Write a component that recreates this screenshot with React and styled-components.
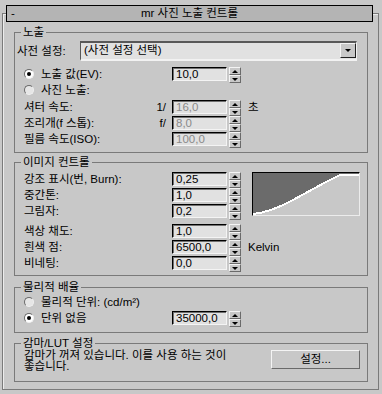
import React from "react";
import styled, { createGlobalStyle } from "styled-components";

const GlobalStyle = createGlobalStyle`
  html, body {
    margin: 0;
    padding: 0;
    background: #c8c8c8;
  }
  body {
    font-family: "Liberation Sans", "Noto Sans CJK KR", sans-serif;
    font-size: 11.5px;
    line-height: 13px;
    color: #000;
  }
`;

const Page = styled.div`
  width: 382px;
  height: 394px;
  box-sizing: border-box;
  padding-top: 13px;
  overflow: hidden;
`;

// 롤아웃 바깥 테두리
const Frame = styled.div`
  margin: 0 3px 0 2px;
  border: 1px solid #7a7a7a;
  box-shadow: inset 1px 1px 0 #ececec;
  padding-bottom: 7px;
`;

const Header = styled.div`
  margin: -9px 5px 0 3px;
  height: 17px;
  box-sizing: border-box;
  border: 1px solid #000;
  background: #b4b4b4;
  display: grid;
  grid-template-columns: 20px 1fr 20px;
  align-items: center;
`;

const Collapse = styled.span`
  padding-left: 4px;
`;

const Title = styled.span`
  text-align: center;
  white-space: nowrap;
`;

const Group = styled.fieldset`
  margin: ${(p) => p.$mt}px 10px 0 11px;
  padding: ${(p) => p.$pt || 0}px 0 ${(p) => p.$pb || 0}px 0;
  border: 1px solid #7a7a7a;
  min-width: 0;
`;

const Legend = styled.legend`
  margin-left: 6px;
  padding: 0 2px;
  height: 13px;
  line-height: 13px;
`;

const SelectRow = styled.div`
  display: flex;
  align-items: center;
  height: 20px;
  padding-left: 2px;
`;

const Row = styled.div`
  display: flex;
  align-items: flex-start;
  height: 16px;
  padding-left: 9px;
  margin-top: ${(p) => p.$mt || 0}px;
`;

const Label = styled.div`
  width: ${(p) => p.$w ?? 130}px;
  line-height: 14px;
  white-space: nowrap;
  display: flex;
  align-items: center;
`;

const Prefix = styled.div`
  width: 12px;
  padding-right: 6px;
  text-align: right;
  line-height: 14px;
`;

const Select = styled.div`
  width: 277px;
  height: 20px;
  box-sizing: border-box;
  background: #e1e1e1;
  border-top: 2px solid #585858;
  border-left: 1px solid #585858;
  border-right: 1px solid #f2f2f2;
  border-bottom: 2px solid #f2f2f2;
  display: flex;
  align-items: flex-start;
  justify-content: space-between;
  padding-left: 3px;
  line-height: 15px;
`;

const DropBtn = styled.div`
  width: 16px;
  height: 15px;
  box-sizing: border-box;
  background: #c8c8c8;
  border: 1px solid;
  border-color: #f4f4f4 #202020 #202020 #f4f4f4;
  display: flex;
  align-items: center;
  justify-content: center;
`;

const Arrow = styled.span`
  width: 0;
  height: 0;
  border-left: 3px solid transparent;
  border-right: 3px solid transparent;
  ${(p) =>
    p.$up ? "border-bottom: 3px solid #000;" : "border-top: 3px solid #000;"}
`;

const Field = styled.input`
  width: 55px;
  height: 14px;
  box-sizing: border-box;
  margin: 0;
  background: #e1e1e1;
  border-style: solid;
  border-width: 1px;
  border-color: #000 #f4f4f4 #f4f4f4 #000;
  box-shadow: inset 1px 1px 0 #707070;
  padding: 0 0 0 3px;
  font: inherit;
  line-height: 12px;
  color: ${(p) => (p.disabled ? "#8a8a8a" : "#000")};
  outline: none;
`;

const Spinner = styled.div`
  margin-left: 2px;
  width: 12px;
  height: 16px;
  display: flex;
  flex-direction: column;
`;

const SpinHalf = styled.div`
  flex: 1;
  box-sizing: border-box;
  background: #c8c8c8;
  border: 1px solid;
  border-color: #f4f4f4 #6a6a6a #6a6a6a #f4f4f4;
  display: flex;
  align-items: center;
  justify-content: center;
`;

const Unit = styled.span`
  margin-left: 7px;
  line-height: 14px;
`;

const RadioDot = styled.span`
  width: 10px;
  height: 10px;
  flex: none;
  box-sizing: border-box;
  border-radius: 50%;
  border: 1px solid;
  border-color: #6a6a6a #efefef #efefef #6a6a6a;
  background: ${(p) => (p.$checked ? "#fff" : "#e6e6e6")};
  margin-right: 7px;
  display: flex;
  align-items: center;
  justify-content: center;
  &::after {
    content: "";
    width: 4px;
    height: 4px;
    border-radius: 50%;
    background: ${(p) => (p.$checked ? "#000" : "transparent")};
  }
`;

const Split = styled.div`
  display: flex;
  align-items: flex-start;
`;

const Stack = styled.div`
  display: flex;
  flex-direction: column;
`;

const Curve = styled.div`
  margin-left: 11px;
  width: 108px;
  height: 44px;
  box-sizing: border-box;
  border-style: solid;
  border-width: 1px;
  border-color: #000 #ececec #ececec #000;
  background: #c8c8c8;
  svg {
    display: block;
  }
`;

const Note = styled.div`
  display: flex;
  align-items: flex-start;
  padding-left: 9px;
`;

const NoteText = styled.p`
  margin: 0;
  line-height: 11px;
  white-space: nowrap;
`;

const Button = styled.button`
  margin-left: auto;
  margin-right: 7px;
  width: 89px;
  height: 19px;
  padding: 0;
  background: #c8c8c8;
  border: 1px solid;
  border-color: #f4f4f4 #6a6a6a #6a6a6a #f4f4f4;
  font: inherit;
  color: #000;
`;

const Spin = () => (
  <Spinner>
    <SpinHalf>
      <Arrow $up />
    </SpinHalf>
    <SpinHalf>
      <Arrow />
    </SpinHalf>
  </Spinner>
);

const NumRow = ({ label, prefix, value, unit, disabled, radio, checked, mt }) => (
  <Row $mt={mt}>
    <Label>
      {radio && <RadioDot $checked={checked} />}
      {label}
    </Label>
    <Prefix>{prefix}</Prefix>
    <Field readOnly value={value} disabled={disabled} />
    <Spin />
    {unit && <Unit>{unit}</Unit>}
  </Row>
);

const App = () => {
  return (
    <Page>
      <GlobalStyle />
      <Frame>
        <Header>
          <Collapse>-</Collapse>
          <Title>mr 사진 노출 컨트롤</Title>
        </Header>

        <Group $mt={4} $pt={2} $pb={4}>
          <Legend>노출</Legend>
          <SelectRow>
            <Label $w={63}>사전 설정:</Label>
            <Select>
              <span>(사전 설정 선택)</span>
              <DropBtn>
                <Arrow />
              </DropBtn>
            </Select>
          </SelectRow>
          <NumRow radio checked label="노출 값(EV):" value="10,0" mt={6} />
          <Row>
            <Label>
              <RadioDot />
              사진 노출:
            </Label>
          </Row>
          <NumRow label="셔터 속도:" prefix="1/" value="16,0" unit="초" disabled mt={1} />
          <NumRow label="조리개(f 스톱):" prefix="f/" value="8,0" disabled />
          <NumRow label="필름 속도(ISO):" value="100,0" disabled />
        </Group>

        <Group $mt={3} $pt={3} $pb={3}>
          <Legend>이미지 컨트롤</Legend>
          <Split>
            <Stack>
              <NumRow label="강조 표시(번, Burn):" value="0,25" />
              <NumRow label="중간톤:" value="1,0" />
              <NumRow label="그림자:" value="0,2" />
            </Stack>
            <Curve>
              <svg width="106" height="42" viewBox="0 0 106 42" shapeRendering="crispEdges">
                <path
                  d="M0 0 H106 V1.5 H88 C70 10 55 19 40 27 C25 35 12 40 0 41 Z"
                  fill="#6b6b6b"
                />
                <path
                  d="M0 41 C12 40 25 35 40 27 C55 19 70 10 88 1.5 H106"
                  fill="none"
                  stroke="#fff"
                  strokeWidth="2"
                />
              </svg>
            </Curve>
          </Split>
          <NumRow label="색상 채도:" value="1,0" mt={4} />
          <NumRow label="흰색 점:" value="6500,0" unit="Kelvin" />
          <NumRow label="비네팅:" value="0,0" />
        </Group>

        <Group $mt={5} $pt={1} $pb={5}>
          <Legend>물리적 배율</Legend>
          <Row>
            <Label $w={200}>
              <RadioDot />
              물리적 단위: (cd/m²)
            </Label>
          </Row>
          <NumRow radio checked label="단위 없음" value="35000,0" />
        </Group>

        <Group $mt={4} $pb={9}>
          <Legend>감마/LUT 설정</Legend>
          <Note>
            <NoteText>
              감마가 꺼져 있습니다. 이를 사용 하는 것이
              <br />
              좋습니다.
            </NoteText>
            <Button type="button">설정...</Button>
          </Note>
        </Group>
      </Frame>
    </Page>
  );
};

export default App;
